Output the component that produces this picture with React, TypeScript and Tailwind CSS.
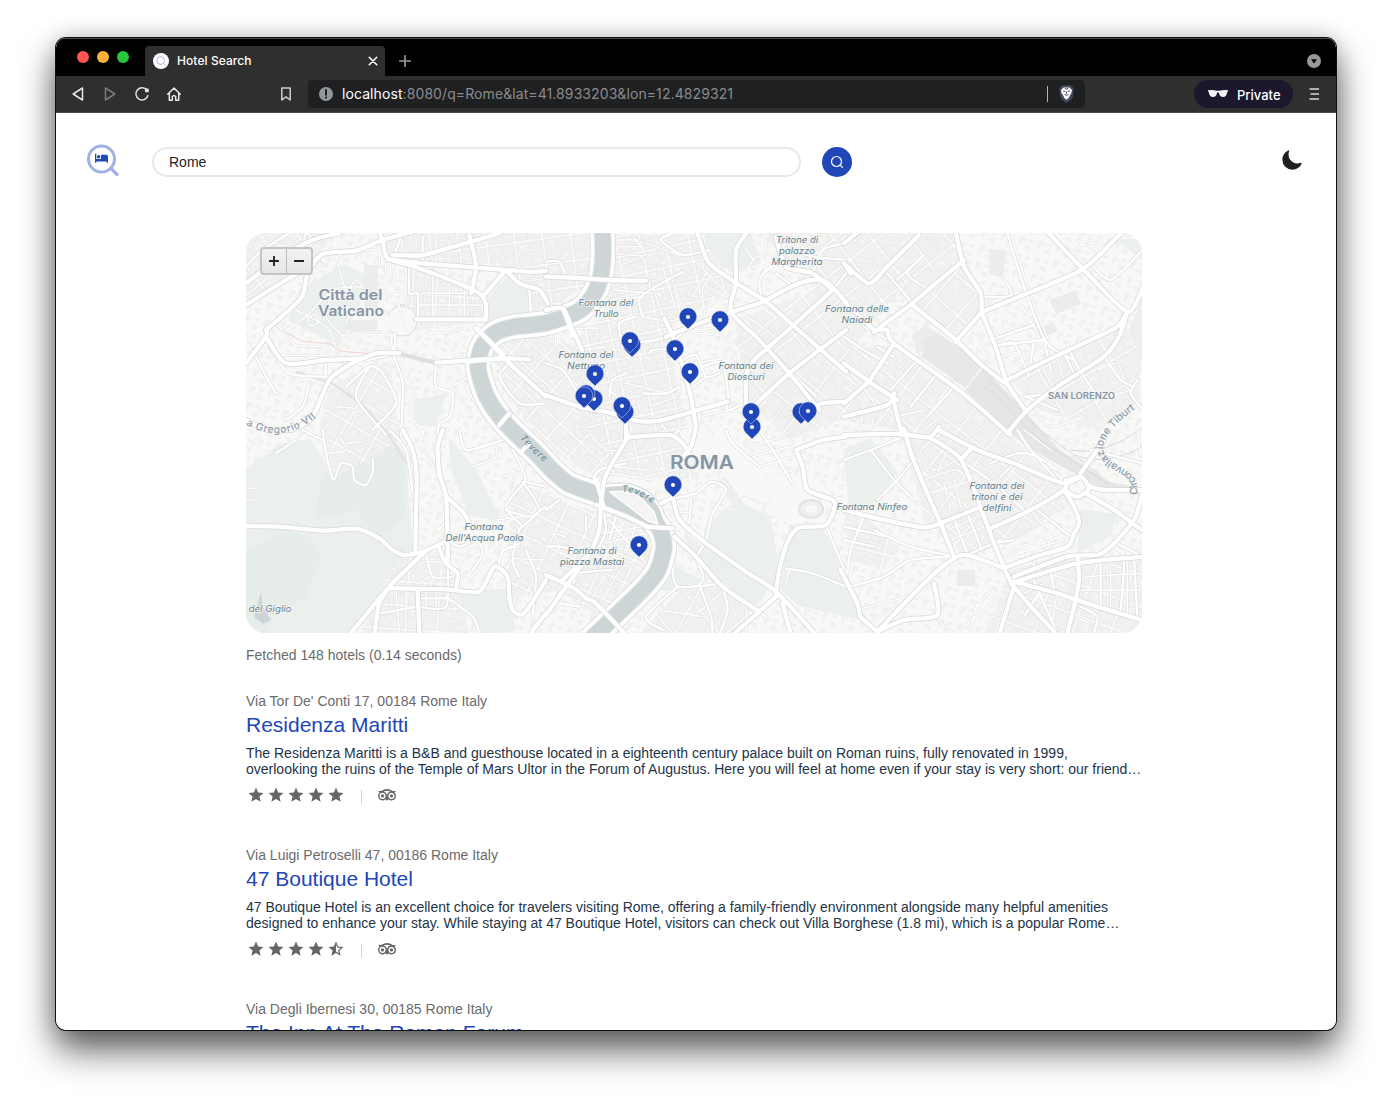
import React from "react";
import { MdStar, MdStarHalf } from "react-icons/md";
import { FaTripadvisor } from "react-icons/fa";
import { IoMoon } from "react-icons/io5";

type Tile = { x: number; y: number; major: string[]; mid: string[]; minor: string[] };

const tiles: Tile[] = [
  {
    x: 246, y: 230,
    major: [
      "0 160 100 85 200 30 280 10",
      "0 225 120 150 185 115",
      "60 300 165 205 185 130 230 72 330 62 410 30 500 5",
      "400 5 412 40 425 85 500 108 600 145 700 190 720 225 718 270",
      "440 75 530 75 640 45 760 10",
      "425 88 530 100 780 120 860 126 900 122",
      "0 400 60 320 60 300",
      "0 570 60 598 140 598 200 560 250 450 310 405 390 370 460 370",
      "570 398 660 392 760 385 850 388",
      "690 295 740 345 790 400 900 500",
      "780 120 820 160 880 180 905 220",
      "780 120 715 195",
      "670 15 690 110 675 190",
      "60 320 120 400 240 390 350 385",
      "510 268 720 268",
      "760 585 790 550",
    ],
    mid: [
      "570 398 570 470 620 490 612 560 580 580 575 620",
      "20 10 0 40", "130 10 50 60 0 110", "200 30 180 10 160 70 90 120",
      "360 390 440 371 446 310", "440 371 470 460 465 615",
      "300 470 370 410 410 430 450 520 380 600", "370 410 330 500 420 615",
      "20 360 60 440 90 490", "70 350 130 430 240 440", "190 460 170 530 120 570",
      "240 395 240 440 270 440", "850 180 855 250", "790 400 760 440 820 520 896 520",
      "445 75 465 20", "490 105 490 190 515 190 515 270", "530 100 530 20",
    ],
    minor: [
      "100 290 150 230 210 130 270 80 390 60 400 110", "120 300 180 260 260 180 350 170",
      "150 240 240 290 270 350", "190 260 210 255 215 280 190 285 185 262", "260 180 240 260 290 320 280 355",
      "270 80 300 180 330 150 350 170", "100 290 150 345 240 350 240 375 100 375",
      "300 280 320 250 390 250", "290 315 430 315 435 325 440 360", "420 100 420 190 480 190",
      "440 100 450 190 480 300", "600 320 660 470 740 600", "480 190 480 60",
      "460 400 500 470 490 540 530 610", "540 310 620 305 650 295", "800 400 830 450 896 470",
      "700 420 620 460 680 560", "20 520 60 560", "270 530 330 540 310 600",
      "570 130 570 20", "610 140 610 30", "650 150 640 30", "530 190 700 190", "515 225 715 225", "560 120 560 265", "610 140 610 265", "655 165 655 265",
    ],
  },
  {
    x: 546, y: 230,
    major: [
      "455 10 488 98 570 158 660 215 740 285 900 425",
      "605 5 570 60 570 158 555 245 640 330 730 430 820 540",
      "360 320 460 280 560 245 650 215 740 168 800 150 840 155 900 215",
      "860 180 740 288 625 390 600 440 602 540",
      "900 300 730 430 600 550",
      "0 495 100 530 190 548 270 572 340 572 450 542 545 515",
      "0 140 100 144 190 150 300 152",
      "0 240 50 235 80 300 108 360",
      "355 265 385 330 430 480 450 590",
      "860 180 800 130 720 110 690 20",
      "240 615 240 572",
      "740 550 830 520 900 515",
    ],
    mid: [
      "650 215 640 160 655 125 690 100", "860 180 900 130", "340 572 370 615",
      "290 260 285 200 410 125", "410 390 450 375 480 440 520 430", "230 350 220 280 270 260",
      "260 340 330 330 360 320", "310 370 320 360 385 355", "430 480 480 440", "470 410 530 400 550 520",
      "600 520 545 540 545 515", "385 330 420 300", "660 350 740 430 810 500",
      "380 10 345 30 410 75 490 60", "740 60 800 80 900 90", "290 490 360 490 400 470",
      "240 570 230 520 190 480", "0 400 50 420 90 480", "190 500 200 450 240 430",
      "0 95 40 95 60 140", "800 130 830 60 896 40", "740 168 690 130",
    ],
    minor: [
      "200 180 320 190", "200 70 300 75 260 20", "210 110 290 80", "190 210 290 200", "60 300 150 295 150 330",
      "110 360 180 350", "290 260 390 270 560 190", "320 170 350 260", "380 150 410 240", "210 30 280 30", "210 50 290 50",
      "350 110 390 240", "470 60 475 120 545 190", "480 130 440 200", "500 130 470 180 480 280",
      "620 90 660 60 655 10", "620 130 640 140 710 90 760 100", "190 570 150 480 160 440",
      "240 460 360 490", "30 350 30 290 60 300", "300 40 400 75", "460 300 530 290", "430 310 530 320 570 390",
      "610 200 690 260 740 240", "590 250 700 330", "440 400 540 385", "500 615 470 560 560 540",
      "700 60 760 70 740 10", "600 55 620 90 600 120", "310 530 390 500 400 470",
    ],
  },
  {
    x: 844, y: 230,
    major: [
      "0 100 75 160 130 110 225 15", "0 40 50 0",
      "20 130 0 100", "90 305 205 220 270 165 360 90",
      "90 300 130 300 150 340 350 485 500 615", "205 225 330 325 410 402 480 458",
      "335 5 360 110 410 190 415 250 455 350 490 460 548 545",
      "415 245 550 190 720 115 840 0", "610 5 720 120 850 245 900 165",
      "335 335 415 245", "480 455 590 400 750 325 820 290 850 245",
      "850 245 825 320 780 380 640 470 550 540 490 610",
      "0 215 90 300", "0 400 75 455 160 510", "75 455 150 340", "75 455 0 520",
      "0 560 130 525 150 490", "145 495 160 560 175 615",
    ],
    mid: [
      "130 130 205 220", "230 165 190 130 225 90", "160 150 240 75", "490 10 540 170 600 325 640 365 690 390",
      "410 200 500 198 490 160", "455 325 570 285", "465 345 600 330", "600 330 620 420", "570 330 555 430",
      "460 350 510 340 555 440", "690 390 720 440 760 500", "660 370 690 430", "720 120 790 190",
      "740 100 800 150 896 60", "780 380 830 450 870 470", "690 390 670 340", "545 500 640 540",
      "540 500 590 495", "896 540 860 490 880 450", "250 180 285 150", "150 340 60 290",
      "100 350 150 380", "220 390 140 480", "280 430 200 530", "330 470 250 560", "0 320 60 360 130 400",
    ],
    minor: [
      "500 10 550 170 610 325", "520 205 570 290 590 330", "455 315 560 275", "470 380 540 360", "480 410 550 385",
      "350 350 400 310 440 400", "590 400 640 500", "640 380 660 450", "0 470 60 520 40 615", "20 430 90 520 80 600",
      "160 560 240 540", "570 540 620 590 720 560", "800 500 860 480", "760 420 820 400 840 450",
      "700 30 760 60 800 30", "690 60 740 30 780 70", "240 600 290 560",
    ],
  },
  {
    x: 246, y: 430,
    major: [
      "0 288 100 290 230 302 330 296 400 325 440 360 475 375 530 365 600 335",
      "470 0 500 60 512 140 510 250 508 360",
      "310 615 430 470 490 410 545 358",
      "385 615 400 520 430 470",
      "430 475 600 478 700 485 745 410 785 440 790 500 800 540 825 555 850 530 900 450",
      "590 0 575 50 580 130 600 200 605 340 605 400",
      "575 345 600 400 635 430 630 475",
      "600 200 650 245 670 280",
      "515 478 520 615", "850 615 900 550",
    ],
    mid: [
      "230 0 240 70 262 150 285 100 320 110 325 150 360 165 380 125 380 85",
      "430 0 480 60 500 190", "605 400 600 530 515 530", "520 505 600 505",
      "540 370 560 440 620 440", "400 550 515 530", "605 330 640 350 690 330 710 370 680 420",
      "575 300 610 270", "755 420 770 365 820 340", "640 0 660 60 740 40 770 30",
      "770 0 830 120 835 155 780 230 830 290", "835 155 900 170", "830 155 880 240 820 300 800 390 820 440",
      "780 240 850 260 900 230", "840 360 870 440 860 560", "600 500 680 560 700 610",
      "90 70 150 30", "170 0 230 30",
    ],
    minor: [
      "0 175 25 175", "0 210 35 210", "530 0 550 90 580 130", "750 270 830 260", "670 60 740 40 750 80 680 110",
      "770 140 830 125", "560 440 555 475", "540 480 540 530", "570 480 570 530", "450 480 460 609", "480 475 480 600",
      "500 430 510 460 550 440", "570 290 590 320", "750 360 820 350", "640 420 660 370 700 350",
      "670 450 710 400", "545 395 605 395", "240 70 300 60 280 20", "300 40 350 35", "0 60 40 20",
      "800 385 896 390", "760 250 800 270",
    ],
  },
  {
    x: 546, y: 430,
    major: [
      "240 -5 242 25 180 135 165 220 160 300 130 370 60 470 0 555",
      "240 22 370 15 410 40 430 70", "450 -10 435 50 410 80",
      "0 435 85 475 120 505 150 520 240 615",
      "150 225 230 255 300 288", "300 290 380 295",
      "380 200 395 260 420 290 480 340 600 425 690 485 810 615",
      "385 320 450 380 530 470 640 545",
      "690 490 700 420 725 335 760 292 840 285 865 215 785 180 770 110 750 60",
      "750 60 830 30 900 20", "690 500 560 615", "710 520 735 615",
      "345 220 380 203", "50 450 130 370",
    ],
    mid: [
      "840 285 870 360 900 430", "450 380 480 330 500 250 540 180 495 155 450 190 385 205",
      "430 280 435 210", "385 400 380 430 395 470 460 465 470 430 440 370",
      "460 465 495 560 500 615", "460 470 520 460", "640 545 660 560", "540 0 560 40 640 110",
      "720 415 800 430 900 470", "240 100 160 120 130 170", "170 230 180 300 160 350", "0 350 40 350 130 370",
      "40 520 100 530", "80 470 100 430 200 420", "395 470 300 560 350 600", "530 470 545 540 520 615",
      "380 15 400 0", "270 240 280 220 300 200", "190 270 240 330 300 400", "210 260 190 330",
      "0 240 40 210", "120 260 120 300", "640 0 680 60 740 160",
    ],
    minor: [
      "170 310 290 290", "180 340 300 310", "240 260 200 360", "270 280 240 370", "200 380 260 400",
      "330 80 350 120 400 150", "20 310 40 350 10 390", "20 310 60 320", "130 10 180 60 230 60",
      "640 110 740 80", "620 80 730 50", "600 50 720 20", "660 140 750 120",
      "340 540 470 560", "600 540 600 615", "400 590 460 480", "780 70 830 110 860 90 890 140",
      "560 30 610 0", "200 130 320 150", "210 110 300 120", "730 420 720 460", "180 430 140 500", "240 400 210 440 170 510",
      "550 170 500 120 520 90", "370 240 430 250",
    ],
  },
  {
    x: 844, y: 430,
    major: [
      "180 -5 205 80 250 190 290 280 330 380", "0 15 170 12 255 22 285 -10",
      "255 22 350 88 420 260 450 340 480 410", "285 0 400 60 510 100 580 130 660 160 710 140",
      "350 90 385 50", "0 240 100 265 240 292 300 275 400 235",
      "440 295 560 240 660 180 665 150", "660 180 690 230 705 280 690 310 670 350 590 375 490 410",
      "660 180 700 200 735 175 710 140 665 155",
      "725 190 810 240 900 305", "900 180 780 180 740 170", "710 130 780 30",
      "480 415 370 375 320 392 240 460 100 605", "270 460 280 555 180 570 100 605",
      "480 415 510 470 570 540 640 615", "510 470 465 615", "500 460 700 400 900 380",
      "510 455 640 490 760 530 900 572", "700 380 705 450 690 530 668 615",
      "895 190 870 270 800 350 760 375 670 380 510 440",
      "-10 420 40 520 50 560 100 605",
    ],
    mid: [
      "20 470 120 440 200 390 330 380", "90 300 200 350 330 380", "0 290 130 320", "0 330 90 350",
      "440 100 520 70 580 80 640 120", "350 90 450 160 540 240", "510 100 470 140",
      "740 60 896 100", "820 340 896 380", "800 350 840 380 830 540", "770 390 770 540", "870 380 880 560",
      "0 90 80 60 180 20", "80 60 150 150 200 200", "100 210 160 150 210 90", "540 560 590 480",
      "570 400 570 450 640 609", "620 420 630 480", "370 375 470 330", "370 250 410 350", "330 265 370 370",
      "10 430 20 360 60 260", "450 340 510 330", "580 240 680 320", "710 530 760 560 750 609", "520 0 560 60 640 150",
    ],
    minor: [
      "310 300 400 260", "320 330 420 290", "500 260 600 230", "530 200 600 290", "40 540 190 500",
      "390 540 440 480", "350 600 480 490", "380 600 400 520", "640 480 620 609", "720 440 890 430", "710 480 890 480",
      "60 580 200 510", "800 390 800 540", "850 380 850 550", "280 570 330 609", "540 490 600 460",
      "560 520 620 480", "500 360 650 310", "490 380 660 330", "530 350 540 390", "570 340 580 380", "610 325 620 365",
      "880 0 890 80", "830 0 800 40", "660 40 720 20", "540 0 620 60", "690 560 740 580",
      "200 70 270 120 340 90", "240 150 330 120 370 140", "260 190 390 150", "230 60 290 10", "280 130 310 60", "320 240 300 160", "350 230 330 150",
    ],
  },
];

const districts: { id: string; a: number; w: number; h: number; pts: string }[] = [
  { id: "prati", a: -8, w: 14, h: 13, pts: "384,233 592,233 592,283 546,310 500,264 410,262 388,257" },
  { id: "prati2", a: 4, w: 12, h: 12, pts: "408,265 480,295 484,322 415,330 405,300" },
  { id: "nw", a: -38, w: 15, h: 12, pts: "246,233 335,233 305,270 246,305" },
  { id: "ponte", a: 42, w: 14, h: 10, pts: "490,345 546,335 585,350 600,430 640,470 600,480 546,445 500,385" },
  { id: "campo", a: -12, w: 12, h: 10, pts: "612,235 700,235 735,285 665,330 700,480 625,475 580,420 575,340 610,310" },
  { id: "esq", a: -38, w: 15, h: 13, pts: "760,233 955,233 960,250 890,300 875,320 830,380 790,440 745,400 735,320 815,290" },
  { id: "termini", a: 41, w: 15, h: 15, pts: "895,292 964,250 980,295 982,312 955,341" },
  { id: "mont", a: 38, w: 17, h: 14, pts: "844,350 895,345 965,395 1080,500 970,560 925,520 900,430 840,420 790,440 760,400" },
  { id: "slor", a: -30, w: 17, h: 14, pts: "1010,380 1125,328 1140,340 1140,400 1100,430 1040,410" },
  { id: "sgio", a: 20, w: 18, h: 15, pts: "1010,570 1142,555 1142,633 985,633" },
  { id: "aven", a: -40, w: 18, h: 17, pts: "640,633 680,590 720,580 760,610 740,633" },
  { id: "trast", a: 25, w: 14, h: 12, pts: "510,480 560,500 650,530 650,570 600,620 560,590 505,600 510,520" },
  { id: "monte", a: 4, w: 16, h: 12, pts: "395,560 445,550 455,590 470,633 360,633" },
  { id: "greg", a: 30, w: 16, h: 12, pts: "330,385 390,360 400,440 330,480 320,430" },
  { id: "celio", a: 14, w: 16, h: 9, pts: "844,515 870,520 900,550 880,570 850,560" },
];

const parks = [
  "246,470 280,445 310,440 335,480 360,440 385,430 405,455 412,555 350,633 246,633",
  "489,298 505,280 507,272 522,288 548,300 530,315 490,320",
  "705,233 750,233 760,262 735,272 710,258", "736,340 765,322 790,345 765,370 745,365",
  "705,530 725,510 770,520 780,580 755,600 705,555", "790,525 820,527 845,570 866,620 800,605 782,590",
  "844,450 870,440 895,470 880,500 850,510", "925,440 965,455 955,468 930,452",
  "455,590 505,590 515,630 480,633", "660,560 700,580 685,592 655,588", "685,535 765,592 750,612 720,590 698,565",
  "990,535 1038,512 1040,525 1005,545", "1082,510 1115,515 1110,535 1078,552", "1010,572 1065,555 1065,562 1015,578",
  "450,440 475,470 500,520 470,515 452,470", "415,400 445,395 435,425 415,425", "910,233 940,233 925,248",
  "300,290 345,265 370,280 340,345 290,320", "1050,370 1065,360 1070,375 1055,385", "1120,240 1142,240 1142,260",
  "1130,330 1142,300 1142,360", "720,480 780,470 790,515 740,520", "888,285 892,285 896,302 890,302", "546,270 560,268 562,300 546,305",
];

const pins = [
  [688, 317], [720, 320], [675, 349], [690, 372], [632, 345], [630, 341], [595, 374], [594, 399], [586, 394],
  [584, 396], [625, 412], [622, 406], [752, 427], [751, 412], [801, 412], [808, 411], [673, 485], [639, 545],
];

const labels: [string, number, number, number][] = [
  ["Fontana del", 606, 306, 55], ["Trullo", 606, 317, 25], ["Fontana del", 586, 358, 55], ["Nettuno", 586, 369, 38],
  ["Tritone di", 797, 243, 42], ["palazzo", 797, 254, 36], ["Margherita", 797, 265, 51],
  ["Fontana delle", 857, 312, 64], ["Naiadi", 857, 323, 31], ["Fontana dei", 746, 369, 55], ["Dioscuri", 746, 380, 37],
  ["Fontana", 484, 530, 39], ["Dell'Acqua Paola", 484.5, 541, 78], ["Fontana di", 592, 554, 49], ["piazza Mastai", 592, 565, 64],
  ["Fontana Ninfeo", 872, 510, 71], ["Fontana dei", 997, 489, 55], ["tritoni e dei", 997, 500, 51], ["delfini", 997, 510.5, 29],
  ["del Giglio", 270, 612, 43],
];

function smooth(s: string) {
  const n = s.split(" ").map(Number);
  const p: [number, number][] = [];
  for (let i = 0; i < n.length; i += 2) p.push([n[i], n[i + 1]]);
  let d = `M${p[0][0]} ${p[0][1]}`;
  for (let i = 0; i < p.length - 1; i++) {
    const a = p[i - 1] || p[i], b = p[i], c = p[i + 1], e = p[i + 2] || c;
    const t = 8;
    d += `C${b[0] + (c[0] - a[0]) / t} ${b[1] + (c[1] - a[1]) / t} ${c[0] - (e[0] - b[0]) / t} ${c[1] - (e[1] - b[1]) / t} ${c[0]} ${c[1]}`;
  }
  return d;
}

function Roads({ kind, color, width }: { kind: "major" | "mid" | "minor"; color: string; width: number }) {
  return (
    <g fill="none" stroke={color} strokeWidth={width * 3} strokeLinejoin="round" strokeLinecap="round">
      {tiles.map((t, i) => (
        <path key={i} transform={`translate(${t.x} ${t.y}) scale(.33333)`} d={t[kind].map(smooth).join("")} />
      ))}
    </g>
  );
}

const river = smooth("602 225 603 250 601 275 594 294 579 311 546 323 513 327 495 333 482 347 478 368 487 397 506 424 536 453 553 471 569 484 596 494 625 506 648 516 660 530 664 547 658 570 646 586 629 603 590 640");
const arm = smooth("598 493 612 490 628 490 644 497 656 510 662 530");

function RomeMap() {
  return (
    <svg viewBox="246 233 896 400" className="block h-full w-full font-['Inter',sans-serif]">
      <defs>
        {districts.map((d) => (
          <pattern key={d.id} id={d.id} width={d.w * 2} height={d.h * 2} patternUnits="userSpaceOnUse" patternTransform={`rotate(${d.a})`}>
            <rect width={d.w * 2} height={d.h * 2} fill="#fefefe" />
            {[0, 1].map((r) => [0, 1].map((c) => (
              <rect key={`${r}${c}`} x={c * d.w + 1.2} y={r * d.h + 1.2} width={d.w - (c ? 2.4 : 1.6)} height={d.h - (r ? 2.4 : 1.6)} fill="#f0f0ef" stroke="#e0e0e0" strokeWidth=".7" />
            )))}
            <path d={`M${d.w * 0.35} ${d.h * 0.4}h${d.w * 0.3}v${d.h * 0.25}M${d.w * 1.3} ${d.h * 1.5}h${d.w * 0.4}`} fill="none" stroke="#f7f7f6" strokeWidth="1.5" />
          </pattern>
        ))}
        <pattern id="blocks" width="19" height="17" patternUnits="userSpaceOnUse" patternTransform="rotate(12)">
          <path d="M2 2h6v4H5v4H2zM11 3h5v3h-5zM9 10h6v5h-3v-2H9z" fill="#f1f1f0" />
        </pattern>
        <pattern id="rails" width="3" height="2.6" patternUnits="userSpaceOnUse" patternTransform="rotate(37)">
          <rect width="3" height="2.6" fill="#ececec" /><rect width="3" height=".8" fill="#dedede" />
        </pattern>
        <path id="tevereA" d="M520 438Q534 455 550 466" />
        <path id="tevereB" d="M622 492Q638 491 655 506" />
        <path id="greg7" d="M246 425Q287 446 322 412" />
        <path id="ring" d="M1137 495C1141 466 1110 470 1103 450Q1101 430 1150 399" />
      </defs>
      <rect x="246" y="233" width="896" height="400" fill="#f8f8f6" />
      <rect x="246" y="233" width="896" height="400" fill="url(#blocks)" />
      <g fill="#ebf0ed" stroke="#ebf0ed" strokeWidth="2" strokeLinejoin="round">{parks.map((p) => <polygon key={p} points={p} />)}</g>
      <path d="M246 550l40-20 25 8 10 20-15 40-30 15-10 20h-20zM320 480q20-30 50-15l20-20 14 10 2 60-30 25-20-30-40 10z" fill="#e5ede7" opacity=".7" />
      {districts.map((d) => <polygon key={d.id} points={d.pts} fill={`url(#${d.id})`} opacity=".85" />)}
      <g fill="#ececec">
        <path d="M347 320h30v12h-25q-8-3-5-12zM364 265h14v45h-14zM990 249l16 2-3 26-14-3z" />
        <path d="M912 335l15-10 12 10-22 20zM957 570h18v16h-18zM1050 300l25-10 6 14-25 10zM1035 330l18-8 5 9-18 8z" />
      </g>
      <path d="M924 340l14-7 45 32-18 23-43-31z" fill="url(#rails)" />
      <path d="M983 368l22 22 55 60 50 32 32 6v8l-45-10-72-40-60-56z" fill="#e6e6e5" />
      <path d="M985 375l55 55 60 45M980 382l60 58 70 45M1075 455q30 12 67-8M1070 450q35 6 72-22" stroke="#d9d9d9" fill="none" />
      <path d="M296 372l35 11 30 20 30 35 15 25" stroke="#e2e2e2" strokeWidth="2.5" fill="none" />
      <path d="M400 354l36 9" stroke="#dedede" strokeWidth="4" fill="none" />
      <path d="M276 327l25 14 30 3 8 7 33 3M316 255l10 12M407 265v26M391 311q6-8 14-6" stroke="#f0d3d5" fill="none" />
      <circle cx="402" cy="321" r="15" fill="#f8f8f6" stroke="#dedede" strokeWidth="1" />
      <path d="M377 316h16v14h-16z" fill="#f8f8f6" />
      <path d="M680 430l35-8 45 38 55 30 8 25-28 10-50-20-35-50-25 5z" fill="#f8f8f7" />
      <g fill="none" stroke="#eef2ef" strokeWidth="2"><path d="M724 510l20-14 20 8 5 30-20 15-24-12zM735 500l20 45M770 500l-30 40" /></g>
      <ellipse cx="811" cy="509" rx="12" ry="9" fill="#efefee" stroke="#e3e3e3" strokeWidth="2" />
      <ellipse cx="811" cy="509" rx="6" ry="4" fill="#f8f8f6" />
      <path d="M261 592l2 15 8 13-8 4-9-7 3-10z" fill="#cdd5d9" />
      <Roads kind="minor" color="#e0e0e0" width={2.5} />
      <Roads kind="mid" color="#dcdcdc" width={3.6} />
      <Roads kind="minor" color="#ffffff" width={1.5} />
      <Roads kind="mid" color="#ffffff" width={2.4} />
      <g fill="none">
        <path d={arm} stroke="#dadada" strokeWidth="14" />
        <path d={river} stroke="#d8d8d8" strokeWidth="26" />
        <path d={arm} stroke="#fff" strokeWidth="12" />
        <path d={river} stroke="#fff" strokeWidth="24.5" />
        <path d={river} stroke="#e2e5e5" strokeWidth="17.5" />
        <path d={river} stroke="#cdd5d7" strokeWidth="15.5" />
        <path d={arm} stroke="#cdd5d7" strokeWidth="7" />
        <path d="M610 492q20-3 32 7l12 13 4 12-10-3-16-12z" fill="#f4f4f3" stroke="#fff" strokeWidth="1.5" />
      </g>
      <Roads kind="major" color="#d8d8d8" width={5.8} />
      <Roads kind="major" color="#ffffff" width={4.3} />
      <g fill="none">
        <path d="M562 307l12 30M466 362l40-4M595 478l10 32M530 443l-10 10" stroke="#fff" strokeWidth="4" />
        <path d="M476 328l28 28" stroke="#fff" strokeWidth="5" />
      </g>
      <g fill="#8595a5" fontWeight="600" textAnchor="middle" stroke="#f5f5f4" strokeWidth="2" strokeLinejoin="round" style={{ paintOrder: "stroke" }}>
        <text x="350.5" y="299.5" fontSize="14" textLength="64" lengthAdjust="spacingAndGlyphs">Città del</text>
        <text x="351" y="315.5" fontSize="14" textLength="66" lengthAdjust="spacingAndGlyphs">Vaticano</text>
        <text x="702" y="468.5" fontSize="19" textLength="64" lengthAdjust="spacingAndGlyphs">ROMA</text>
        <text x="1081.5" y="399" fontSize="9" textLength="67" lengthAdjust="spacingAndGlyphs">SAN LORENZO</text>
      </g>
      <g fill="#66828f" fontSize="8.6" fontStyle="italic" textAnchor="middle" stroke="#f5f5f4" strokeWidth="1.5" strokeLinejoin="round" style={{ paintOrder: "stroke" }}>
        {labels.map(([t, x, y, w]) => (
          <text key={`${t}${y}`} x={x} y={y} textLength={w} lengthAdjust="spacingAndGlyphs">{t}</text>
        ))}
      </g>
      <g fill="#66828f" fontSize="9" fontStyle="italic">
        <text textLength="34"><textPath href="#tevereA">Tevere</textPath></text>
        <text textLength="33"><textPath href="#tevereB">Tevere</textPath></text>
      </g>
      <g fill="#8d9dab" fontSize="10" fontWeight="500">
        <text textLength="75"><textPath href="#greg7">a Gregorio VII</textPath></text>
        <text fontSize="10.3"><textPath href="#ring">Circonvallazione Tiburt</textPath></text>
      </g>
      {pins.map(([x, y], i) => (
        <g key={i} transform={`translate(${x} ${y})`}>
          <path d="M0 12L-6.4 5.7A8.8 8.8 0 1 1 6.4 5.7Z" fill="#2046b8" stroke="#dbe2f5" strokeWidth=".5" />
          <circle r="2.1" fill="#fff" />
        </g>
      ))}
    </svg>
  );
}

function Stroke({ d, c = "#e6e6e6", size = 16, w = 1.5 }: { d: string; c?: string; size?: number; w?: number }) {
  return (
    <svg width={size} height={size} viewBox="0 0 16 16" fill="none" stroke={c} strokeWidth={w} strokeLinejoin="round" strokeLinecap="round">
      <path d={d} />
    </svg>
  );
}

function Chrome() {
  return (
    <div className="font-['Inter',sans-serif]">
      <div className="flex h-[38px] items-end bg-black pr-[14px] shadow-[inset_0_1px_0_#4a4a4a]">
        <div className="mb-[13px] ml-[21px] flex gap-2">
          <i className="size-3 rounded-full bg-[#ff5651]" />
          <i className="size-3 rounded-full bg-[#fdb136]" />
          <i className="size-3 rounded-full bg-[#29c440]" />
        </div>
        <div className="ml-4 flex h-[30px] w-60 items-center rounded-t-[4px] bg-[#2f2f2f] pr-[7px] pl-2">
          <svg width="16" height="16" viewBox="0 0 16 16" fill="none">
            <circle cx="8" cy="8" r="8" fill="#fff" />
            <circle cx="7.7" cy="7.6" r="3.9" stroke="#a9b9e6" strokeWidth="1" />
            <path d="M10.5 10.5l2.2 2.2" stroke="#a9b9e6" />
          </svg>
          <span className="ml-2 text-[12px] leading-4 font-medium tracking-[0.08px] text-white">Hotel Search</span>
          <span className="ml-auto"><Stroke size={10} w={2.4} c="#fff" d="M2 2l12 12M14 2L2 14" /></span>
        </div>
        <span className="mb-[9px] ml-[14px]"><Stroke size={12} w={2.2} c="#9b9b9b" d="M8 1v14M1 8h14" /></span>
        <svg className="mb-2 ml-auto" width="16" height="14" viewBox="0 0 16 14">
          <circle cx="8" cy="7" r="7" fill="#999" /><path d="M5 5.2h6L8 9.5z" fill="#000" />
        </svg>
      </div>
      <div className="flex h-[37px] items-center border-b border-[#4c4c4c] bg-[#2f2f2f] pr-4 pl-[14px]">
        <Stroke d="M12.5 2v12L3.2 8z" />
        <span className="ml-4"><Stroke c="#7b7b7b" d="M3.5 2v12L12.8 8z" /></span>
        <span className="ml-4">
          <svg width="16" height="16" viewBox="0 0 16 16" fill="none" stroke="#e6e6e6" strokeWidth="1.5">
            <path d="M13 4.4A6.1 6.1 0 1 0 14 9.2" /><circle cx="12.9" cy="4.4" r="1.4" fill="#e6e6e6" />
          </svg>
        </span>
        <span className="ml-4"><Stroke d="M1.7 8.2L8 2l6.3 6.2M3.3 7v7.2h3v-3.5q1.7-2.4 3.4 0v3.5h3V7" /></span>
        <span className="ml-24"><Stroke c="#cfcfcf" d="M3.8 2h8.4v12L8 10.8 3.8 14z" /></span>
        <div className="ml-[14px] flex h-7 w-[777px] items-center rounded-[4px] bg-[#1f2022] px-[11px]">
          <svg width="14" height="14" viewBox="0 0 14 14">
            <circle cx="7" cy="7" r="7" fill="#90969c" /><path d="M7 3v4.7" stroke="#1f2022" strokeWidth="2" strokeLinecap="round" /><circle cx="7" cy="10.6" r="1.1" fill="#1f2022" />
          </svg>
          <span className="ml-[9px] text-[14px] leading-5 tracking-[0.085px] whitespace-nowrap text-[#8b8b8d]"><span className="text-white">localhost</span>:8080/q=Rome&amp;lat=41.8933203&amp;lon=12.4829321</span>
          <i className="ml-auto h-4 w-px bg-[#b4b4b4]" />
          <svg className="ml-[11px]" width="15" height="18" viewBox="0 0 15 18">
            <path d="M3.5.3h8l3.2 3-.8 8.7q-1.7 3.5-6.4 5.900Q2.800 15.500 1.100 12L.3 3.300z" fill="#44465a" />
            <path d="M4.600 2.500h5.800l2.600 2.400-.7 3.700q-1.300 1.200-1.800 2.700L9.600 13l-2.100 1.700L5.400 13l-.9-1.700Q4 9.800 2.700 8.600L2 4.900z" fill="#fff" />
            <path d="M4 5.800l2.400.8M11 5.800l-2.400.8M7.500 6.500v2.800M5.400 9.300l2.100 1.200 2.100-1.200M6.300 3v1h2.400V3" stroke="#44465a" strokeWidth=".9" fill="none" />
          </svg>
        </div>
        <div className="ml-auto flex h-7 w-[99px] items-center rounded-full bg-[#1d172d] pl-[14px] text-[13px] font-medium text-white">
          <svg width="20" height="8" viewBox="0 0 20 8"><path d="M0 .3q5-.6 8.600 .5h2.800q4-1.100 8.600-.5v1.300l-.8.5q-.5 5-4.200 5-3.400 0-4.100-4.600h-1.800Q8.400 7.100 5 7.100q-3.700 0-4.200-5L0 1.600z" fill="#f2f2f4" /></svg>
          <span className="mt-px ml-[9px] leading-4">Private</span>
        </div>
        <svg className="ml-4" width="11" height="12" viewBox="0 0 11 12"><path d="M.5 1h9.500M1.500 6h8.500M.5 11h9.500" stroke="#d8d8d8" strokeWidth="1.600" /></svg>
      </div>
    </div>
  );
}

const hotels = [
  {
    address: "Via Tor De' Conti 17, 00184 Rome Italy", name: "Residenza Maritti", half: false,
    lines: ["The Residenza Maritti is a B&B and guesthouse located in a eighteenth century palace built on Roman ruins, fully renovated in 1999,", "overlooking the ruins of the Temple of Mars Ultor in the Forum of Augustus. Here you will feel at home even if your stay is very short: our friend…"],
  },
  {
    address: "Via Luigi Petroselli 47, 00186 Rome Italy", name: "47 Boutique Hotel", half: true,
    lines: ["47 Boutique Hotel is an excellent choice for travelers visiting Rome, offering a family-friendly environment alongside many helpful amenities", "designed to enhance your stay. While staying at 47 Boutique Hotel, visitors can check out Villa Borghese (1.8 mi), which is a popular Rome…"],
  },
  { address: "Via Degli Ibernesi 30, 00185 Rome Italy", name: "The Inn At The Roman Forum", half: false, lines: [] },
];

export default function App() {
  return (
    <div className="h-[1104px] w-[1392px] overflow-hidden bg-white pt-[38px] pl-14 font-['Liberation_Sans',sans-serif]">
      <div className="h-[992px] w-[1280px] rounded-[10px] shadow-[0_0_0_1px_#111,0_20px_36px_rgba(0,0,0,0.62),0_2px_26px_rgba(0,0,0,0.22)]">
        <div className="h-full overflow-hidden rounded-[10px] bg-white">
          <Chrome />
          <header className="mt-[31px] flex h-9 items-center pr-[33px] pl-[30px]">
            <svg className="mb-[3px]" width="34" height="34" viewBox="0 0 34 34" fill="none">
              <circle cx="15.5" cy="15" r="13" stroke="#a0b2e4" strokeWidth="3" />
              <path d="M25 24.5l6 6" stroke="#a0b2e4" strokeWidth="3.2" strokeLinecap="round" />
              <path d="M9 9.700h1.300v5.300H15v-4.300h5.200q1.800 0 1.800 1.800V18.800h-1.300v-1.400H10.300v1.400H9z" fill="#2046b8" />
              <circle cx="12.6" cy="12.8" r="1.7" fill="#2046b8" />
            </svg>
            <div className="ml-8 flex h-[30px] w-[649px] items-center rounded-full border-2 border-[#e8e8e8] px-[15px] text-[14px] text-[#222]">Rome</div>
            <div className="ml-[21px] grid size-[30px] place-items-center rounded-full bg-[#2046b8]">
              <svg width="14" height="14" viewBox="0 0 14 14" fill="none" stroke="#fff" strokeWidth="1.2"><circle cx="6.5" cy="6.5" r="5" /><path d="M10.2 10.2l2.6 2.6" /></svg>
            </div>
            <IoMoon className="mb-1 ml-auto text-[#1d1f21]" size={22} />
          </header>
          <main className="mt-[53px] ml-[190px] w-[896px]">
            <div className="relative h-[400px] overflow-hidden rounded-[20px]">
              <RomeMap />
              <div className="absolute top-[14px] left-[14px] flex h-7 w-[53px] rounded-[4px] border-2 border-[#c4c4c4] bg-linear-to-b from-[#f2f2f2] to-[#e6e6e6]">
                <span className="grid flex-1 place-items-center border-r border-[#bdbdbd]"><Stroke size={10} w={3} c="#222" d="M8 1v14M1 8h14" /></span>
                <span className="grid flex-1 place-items-center"><Stroke size={10} w={3} c="#222" d="M1 8h14" /></span>
              </div>
            </div>
            <p className="mt-[14px] text-[14px] leading-4 text-[#6b6b6b]">Fetched 148 hotels (0.14 seconds)</p>
            {hotels.map((h, i) => (
              <article key={h.name} className={i ? "h-[154px]" : "mt-[30px] h-[154px]"}>
                <p className="text-[14px] leading-4 text-[#6b6b6b]">{h.address}</p>
                <h2 className="mt-1 text-[21px] leading-6 text-[#2046b8]">{h.name}</h2>
                <div className="mt-2 h-8 text-[14px] leading-4 text-[#243447]">
                  {h.lines.map((l) => <p key={l} className="whitespace-nowrap">{l}</p>)}
                </div>
                <div className="mt-2 flex h-5 items-center text-[#666]">
                  {[0, 1, 2, 3].map((s) => <MdStar key={s} className="mx-px" size={18} />)}
                  {h.half ? <MdStarHalf className="mx-px" size={18} /> : <MdStar className="mx-px" size={18} />}
                  <i className="mt-1 ml-[15px] h-[14px] w-px bg-[#d4d4d4]" />
                  <FaTripadvisor className="ml-4" size={18} />
                </div>
              </article>
            ))}
          </main>
        </div>
      </div>
    </div>
  );
}
